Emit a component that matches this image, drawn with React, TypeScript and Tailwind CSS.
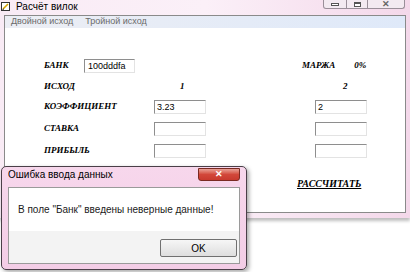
import React from "react";

const serif = "font-['Liberation_Serif',serif] font-bold italic text-[9px] text-black";
const sans = "font-['Liberation_Sans',Arial,sans-serif]";

const Field = ({ value = "" }: { value?: string }) => (
  <div
    className={`w-[52px] h-[14px] bg-white border border-[#8e8e8e] border-r-[#e3e3e3] border-b-[#e3e3e3] pl-[2px] text-[9px] leading-[12px] text-black ${sans}`}
  >
    {value}
  </div>
);

const AppIcon = () => (
  <svg width="9" height="9" viewBox="0 0 9 9">
    <rect x="0.5" y="0.5" width="8" height="8" fill="#fff" stroke="#333" />
    <path d="M2 7 L7 2" stroke="#d4a200" strokeWidth="1.6" />
    <path d="M1.5 7.5 L3 7" stroke="#333" strokeWidth="1" />
  </svg>
);

export default function App() {
  return (
    <div className={`relative w-[410px] h-[272px] bg-white overflow-hidden ${sans}`}>
      {/* main window */}
      <div className="w-[410px] h-[218px] bg-gradient-to-r from-[#f9ebf5] via-[#fbf0f8] to-[#f4d8ea] flex flex-col shadow-[0_3px_3px_rgba(0,0,0,0.25)]">
        <div className="h-[15px] flex items-start">
          <div className="flex items-center gap-[6px] pl-[1px] pt-[2px]">
            <AppIcon />
            <span className="text-[10px] leading-[9px] text-black">Расчёт вилок</span>
          </div>
          <div className="ml-auto mr-[5px] flex h-[9px]">
            <div className="w-[24px] border border-t-0 border-[#9a8f99] rounded-bl-[3px] bg-[#f3eaf1] flex items-center justify-center">
              <div className="w-[8px] h-[3px] border border-[#555] bg-white" />
            </div>
            <div className="w-[21px] border border-t-0 border-l-0 border-[#9a8f99] bg-[#f3eaf1] flex items-center justify-center">
              <div className="w-[7px] h-[5px] border border-[#555] border-t-2 bg-white" />
            </div>
            <div className="w-[37px] border border-t-0 border-l-0 border-[#9a8f99] rounded-br-[3px] bg-[#f3eaf1] flex items-center justify-center text-[9px] leading-[8px] text-[#666] font-bold">
              ✕
            </div>
          </div>
        </div>
        <div className="flex-1 mx-[4px] mb-[5px] border border-[#8a8a8a] flex flex-col bg-white">
          <div className="h-[12px] bg-gradient-to-r from-[#eceef4] to-[#dfe9f9] flex items-center gap-[12px] pl-[6px] text-[9px] text-[#6a6a6a]">
            <span>Двойной исход</span>
            <span>Тройной исход</span>
          </div>
          <div className="flex-1 pl-[39px] pt-[31px]">
            <div className="flex items-center h-[14px]">
              <span className={`${serif} w-[40px]`}>БАНК</span>
              <div className="w-[51px] h-[14px] border border-[#8e8e8e] border-r-[#e3e3e3] border-b-[#e3e3e3] pl-[3px] text-[9px] leading-[12px]">
                100dddfa
              </div>
              <span className={`${serif} ml-[167px] text-[8px]`}>МАРЖА</span>
              <span className={`${serif} ml-[19px]`}>0%</span>
            </div>
            <div className="flex items-center h-[14px] mt-[7px]">
              <span className={`${serif} w-[136px]`}>ИСХОД</span>
              <span className={`${serif} w-[163px]`}>1</span>
              <span className={serif}>2</span>
            </div>
            <div className="flex items-center h-[14px] mt-[6px]">
              <span className={`${serif} w-[110px]`}>КОЭФФИЦИЕНТ</span>
              <Field value="3.23" />
              <div className="w-[109px]" />
              <Field value="2" />
            </div>
            <div className="flex items-center h-[14px] mt-[8px]">
              <span className={`${serif} w-[110px]`}>СТАВКА</span>
              <Field />
              <div className="w-[109px]" />
              <Field />
            </div>
            <div className="flex items-center h-[14px] mt-[8px]">
              <span className={`${serif} w-[110px]`}>ПРИБЫЛЬ</span>
              <Field />
              <div className="w-[109px]" />
              <Field />
            </div>
            <div className="flex mt-[18px] pl-[253px]">
              <span className="font-['Liberation_Serif',serif] font-bold italic text-[10px] text-black underline">РАССЧИТАТЬ</span>
            </div>
          </div>
        </div>
      </div>

      {/* error dialog */}
      <div className="absolute left-[1px] top-[166px] w-[246px] h-[104px] rounded-[5px] border border-[#4a3f48] bg-gradient-to-b from-[#f7d7ec] to-[#f3cde6] flex flex-col shadow-[2px_2px_4px_rgba(0,0,0,0.35)]">
        <div className="h-[20px] flex items-start">
          <span className="pl-[6px] pt-[2px] text-[10px] leading-[12px] text-black">Ошибка ввода данных</span>
          <div className="ml-auto mr-[6px] mt-[1px] w-[42px] h-[13px] rounded-b-[3px] border border-[#7a2a22] bg-gradient-to-b from-[#e8a096] via-[#d2473a] to-[#c83a2e] flex items-center justify-center text-[9px] font-bold text-white leading-none">
            ✕
          </div>
        </div>
        <div className="flex-1 mx-[6px] mb-[5px] border border-[#9a9a9a] flex flex-col bg-white">
          <div className="h-[43px] flex items-center pl-[9px] text-[10px] text-[#1a1a1a]">
            В поле "Банк" введены неверные данные!
          </div>
          <div className="flex-1 bg-[#f3f3f3] flex items-start justify-end pt-[8px] pr-[2px]">
            <div className="w-[77px] h-[18px] rounded-[2px] border border-[#707070] bg-gradient-to-b from-[#f6f6f6] to-[#dedede] flex items-center justify-center text-[10px] text-black">
              OK
            </div>
          </div>
        </div>
      </div>
    </div>
  );
}
